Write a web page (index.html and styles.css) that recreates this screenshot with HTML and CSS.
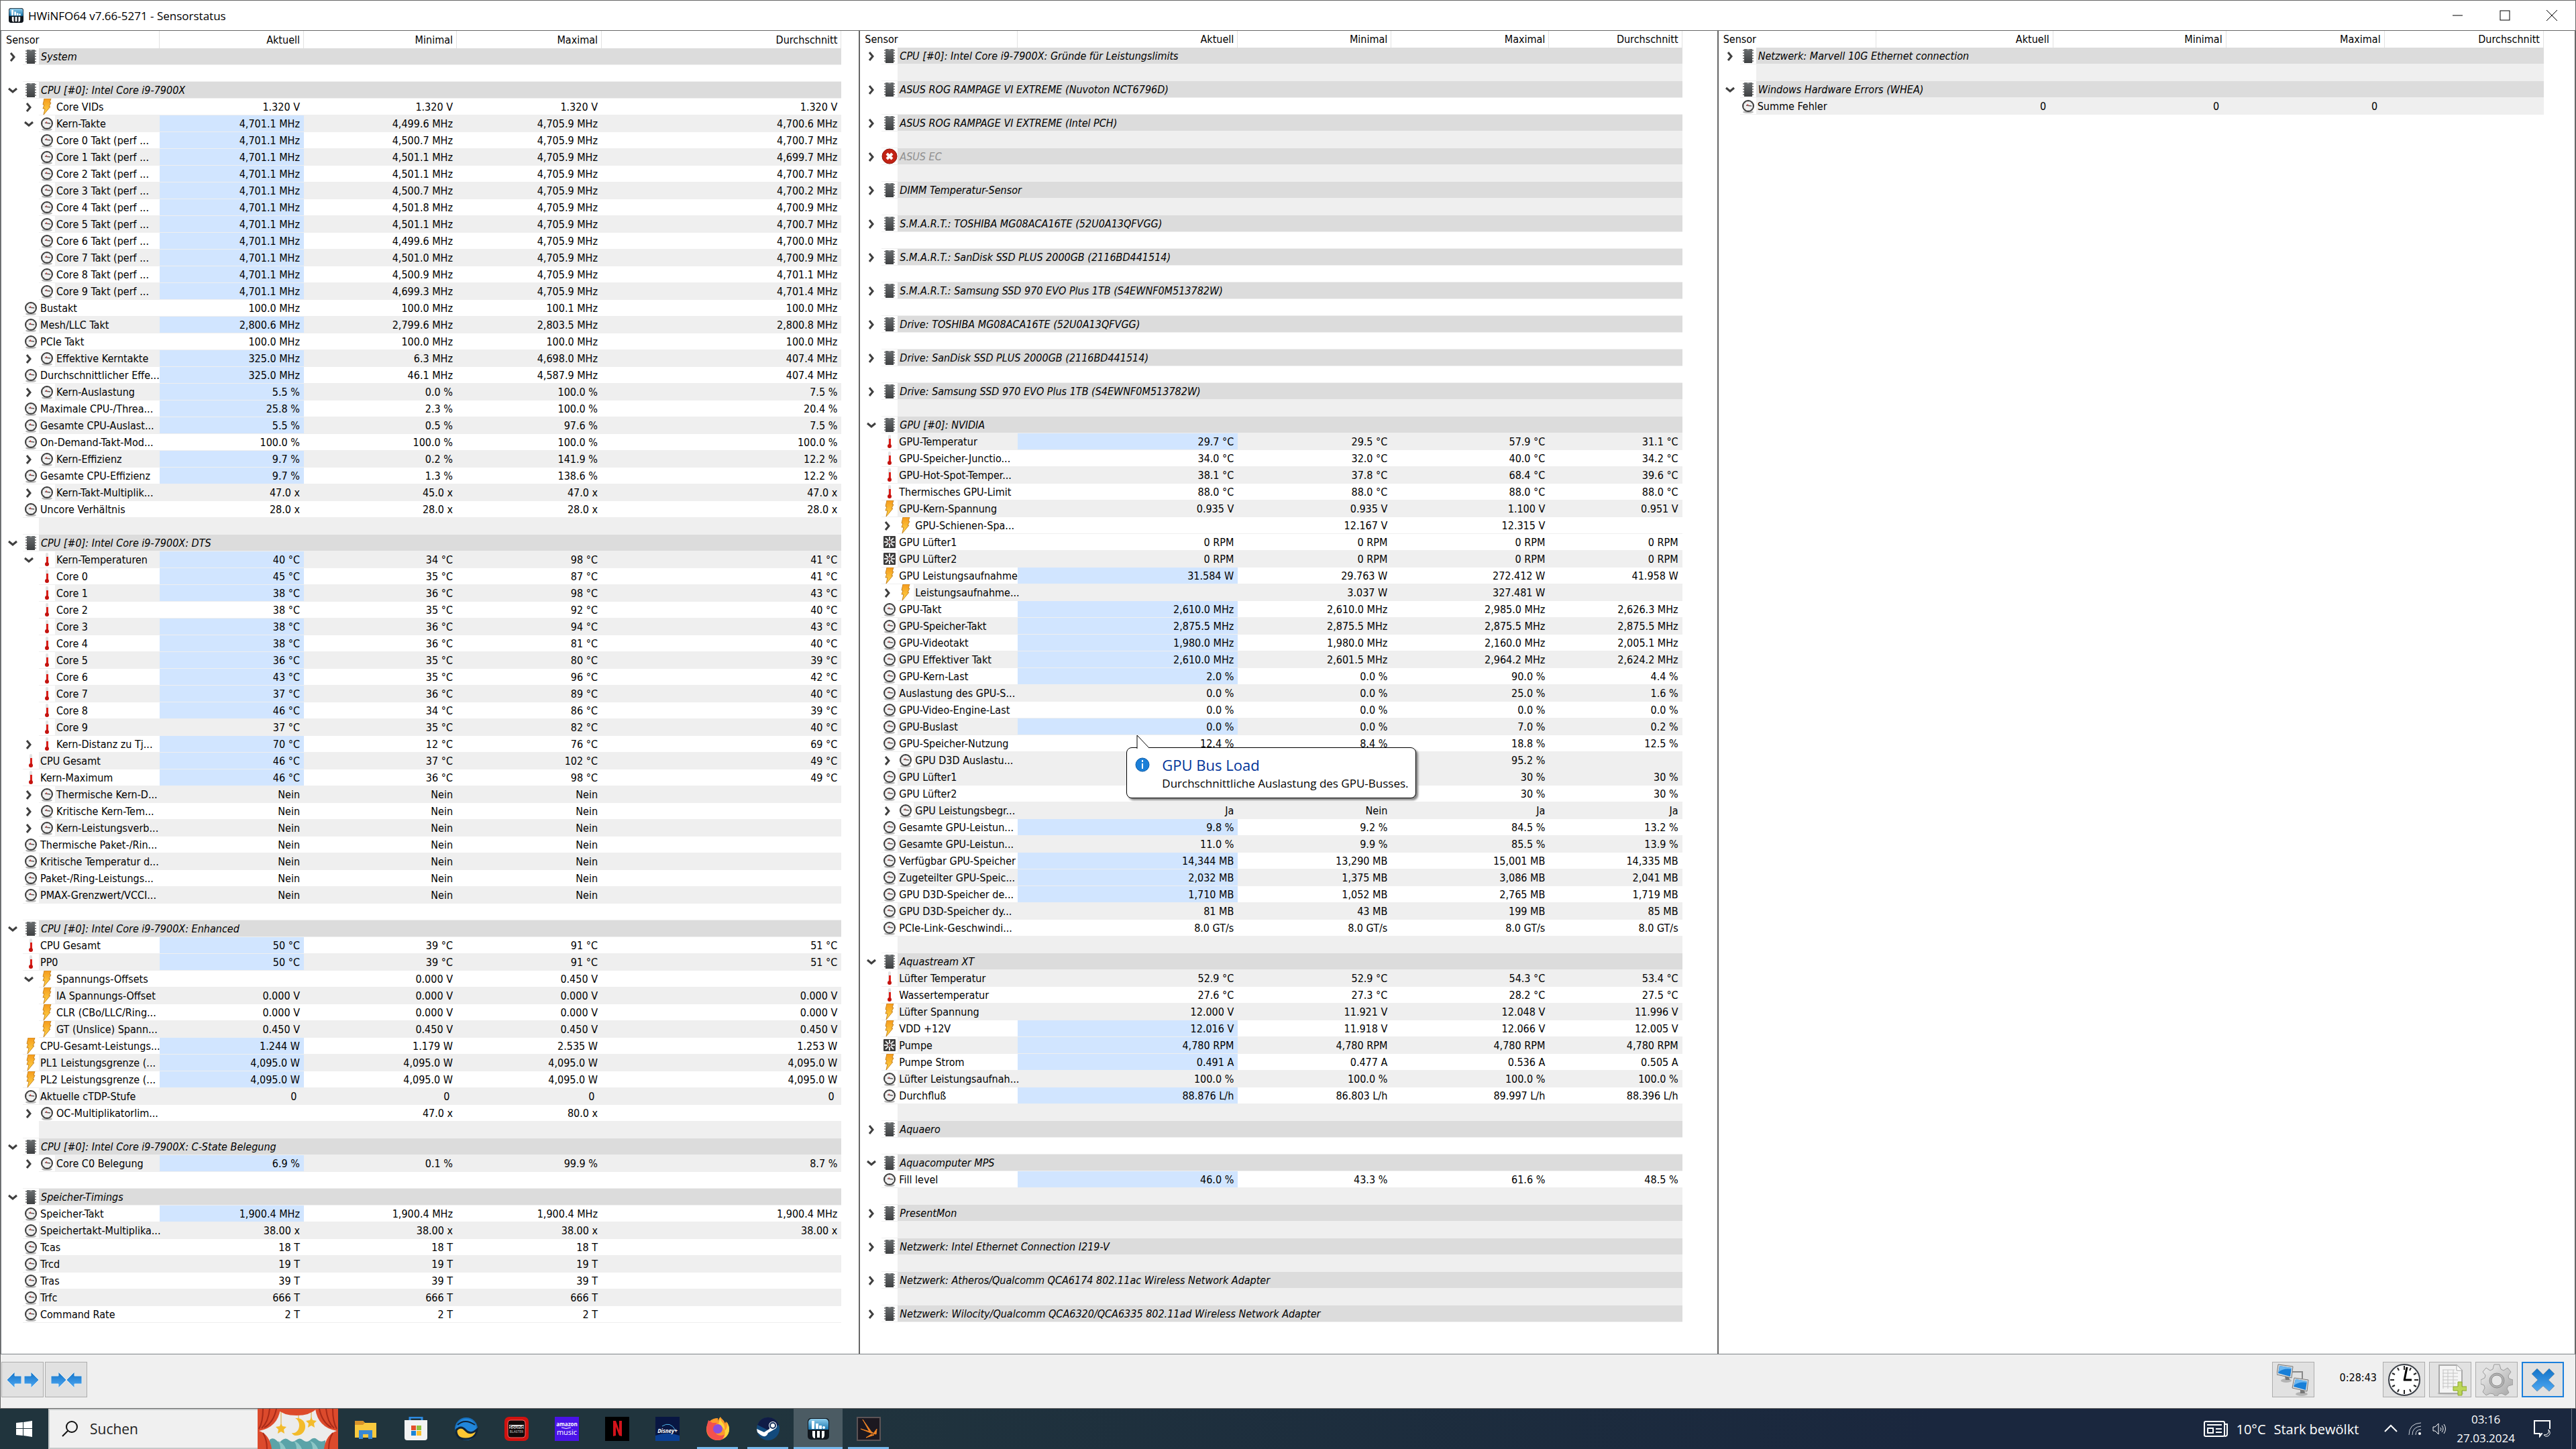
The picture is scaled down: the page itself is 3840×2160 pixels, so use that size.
FILE: index.html
```html
<!DOCTYPE html>
<html lang="de">
<head>
    <meta charset="UTF-8">
    <meta name="viewport" content="width=device-width, initial-scale=1.0">
    <title>HWiNFO64 v7.66-5271 - Sensorstatus</title>
    <link rel="stylesheet" href="styles.css">
</head>
<body>
    <!-- shared icons -->
    <svg class="defs" aria-hidden="true">
        <defs>
            <linearGradient id="boltFill" x1="0" y1="0" x2="0" y2="1">
                <stop offset="0" stop-color="#f59a1c"/>
                <stop offset="1" stop-color="#ffd84a"/>
            </linearGradient>
            <linearGradient id="blueFill" x1="0" y1="0" x2="0" y2="1">
                <stop offset="0" stop-color="#1273c8"/>
                <stop offset="1" stop-color="#4fa8f2"/>
            </linearGradient>
            <linearGradient id="steelFill" x1="0" y1="0" x2="1" y2="1">
                <stop offset="0" stop-color="#f4f4f4"/>
                <stop offset="1" stop-color="#a4a4a4"/>
            </linearGradient>
            <linearGradient id="chipFill" x1="0" y1="0" x2="0" y2="1">
                <stop offset="0" stop-color="#6a6e70"/>
                <stop offset="1" stop-color="#3e4042"/>
            </linearGradient>
            <linearGradient id="appFill" x1="0" y1="0" x2="0" y2="1">
                <stop offset="0" stop-color="#8ecdec"/>
                <stop offset="1" stop-color="#1b78b0"/>
            </linearGradient>
        </defs>
        <symbol id="chip" viewBox="0 0 24 24">
            <path d="M4 4h16M4 8h16M4 12h16M4 16h16M4 20h16" stroke="#8c8c8c" stroke-width="2"/>
            <rect x="6" y="2" width="12" height="21" fill="url(#chipFill)"/>
            <path d="M10 2a2 2 0 0 0 4 0z" fill="#9a9c9d"/>
        </symbol>
        <symbol id="clock" viewBox="0 0 24 24">
            <ellipse cx="12" cy="21" rx="8" ry="2" fill="#bdbdbd"/>
            <circle cx="12" cy="12" r="8" fill="#f1f1f1" stroke="#3c3c3c" stroke-width="2"/>
            <path d="M12 5v1M12 18v1M5 12h1M18 12h1M7 7l1 1M17 7l-1 1M7 17l1-1M17 17l-1-1" stroke="#999" stroke-width="1"/>
            <path d="M9 11l8 1" stroke="#555" stroke-width="1.5"/>
            <path d="M12 12l-1-3" stroke="#d33" stroke-width="1"/>
        </symbol>
        <symbol id="bolt" viewBox="0 0 24 24">
            <path d="M8 0h10l-2 6h2l-3 6h2L7 24l2-9H6l2-6H6z" fill="url(#boltFill)" stroke="#c98522" stroke-width="1"/>
        </symbol>
        <symbol id="temp" viewBox="0 0 24 24">
            <rect x="10" y="2" width="4" height="17" rx="2" fill="#e2e2e2"/>
            <rect x="11" y="8" width="3" height="12" fill="#dc1f1a"/>
            <circle cx="12" cy="19" r="3" fill="#c4120e"/>
        </symbol>
        <symbol id="fan" viewBox="0 0 24 24">
            <rect x="3" y="3" width="18" height="18" rx="1" fill="#3b3b3b"/>
            <path d="M12 4v16M4 12h16M6 6l12 12M18 6L6 18" stroke="#e9e9e9" stroke-width="2"/>
            <circle cx="12" cy="12" r="3" fill="#3b3b3b" stroke="#ddd" stroke-width="1"/>
            <circle cx="12" cy="12" r="1" fill="#e77"/>
        </symbol>
        <symbol id="error" viewBox="0 0 24 24">
            <circle cx="12" cy="12" r="11" fill="#c22214" stroke="#8e1208" stroke-width="1"/>
            <path d="M8 8l8 8M16 8l-8 8" stroke="#fff" stroke-width="4"/>
        </symbol>
        <symbol id="closed" viewBox="0 0 16 16">
            <path d="M5 2l5 6-5 6" fill="none" stroke="#3f3f3f" stroke-width="3"/>
        </symbol>
        <symbol id="open" viewBox="0 0 16 16">
            <path d="M2 5l6 5 6-5" fill="none" stroke="#3f3f3f" stroke-width="3"/>
        </symbol>
        <symbol id="app" viewBox="0 0 32 32">
            <rect x="0" y="0" width="32" height="32" rx="5" fill="#10161d"/>
            <path d="M1 17V6a5 5 0 0 1 5-5h20a5 5 0 0 1 5 5v11z" fill="url(#appFill)"/>
            <path d="M8 4v12M14 8v8M19 11v5" stroke="#fff" stroke-width="4"/>
            <circle cx="24" cy="14" r="2" fill="#fff"/>
            <path d="M9 19v6q0 3 2 3M16 19v10M23 19v6q0 3-2 3" stroke="#fff" stroke-width="4" fill="none"/>
        </symbol>
    </svg>

    <div class="window">
        <header class="titlebar">
            <svg class="app-icon"><use href="#app"/></svg>
            <h1 class="title">HWiNFO64 v7.66-5271 - Sensorstatus</h1>
            <button class="win-button" aria-label="Minimieren"><svg viewBox="0 0 16 16"><path d="M0 8h15" stroke="#000"/></svg></button>
            <button class="win-button" aria-label="Maximieren"><svg viewBox="0 0 16 16"><rect x="1" y="1" width="14" height="14" fill="none" stroke="#000"/></svg></button>
            <button class="win-button" aria-label="Schließen"><svg viewBox="0 0 16 16"><path d="M0 0l16 16M16 0L0 16" stroke="#000"/></svg></button>
        </header>

        <main class="panels">
            <section class="panel panel-left"><table class="sensors" id="left"></table></section>
            <section class="panel panel-middle"><table class="sensors" id="middle"></table></section>
            <section class="panel panel-right"><table class="sensors" id="right"></table></section>
        </main>

        <footer class="toolbar">
            <div class="tools-left">
                <button class="tool" aria-label="Spalten verbreitern">
                    <svg class="arrows" viewBox="0 0 48 28"><path d="M0 14L12 2v6h10v12H12v6zM48 14L36 2v6H26v12h10v6z" fill="url(#blueFill)" stroke="#dfe9ee"/></svg>
                </button>
                <button class="tool" aria-label="Spalten verkleinern">
                    <svg class="arrows" viewBox="0 0 48 28"><path d="M24 14L12 2v6H1v12h11v6zM24 14L36 2v6h11v12H36v6z" fill="url(#blueFill)" stroke="#dfe9ee"/></svg>
                </button>
            </div>
            <button class="tool" aria-label="Netzwerk">
                <svg viewBox="0 0 48 48">
                    <path d="M23 12h15v10" fill="none" stroke="#888" stroke-width="2"/>
                    <ellipse cx="14" cy="25" rx="8" ry="3" fill="#b4b4b4"/>
                    <path d="M12 18h6l1 6h-6z" fill="#777"/>
                    <path d="M2 1l22 3-2 17L0 16z" fill="#dcdcdc" stroke="#777"/>
                    <path d="M4 3l18 3-2 13L2 14z" fill="#187fd8"/>
                    <path d="M4 3l18 3v2Q10 6 3 12z" fill="#6db7f0"/>
                    <ellipse cx="37" cy="45" rx="9" ry="3" fill="#b4b4b4"/>
                    <path d="M35 39h6l1 5h-7z" fill="#777"/>
                    <path d="M26 21l21 3-2 17-22-5z" fill="#dcdcdc" stroke="#777"/>
                    <path d="M28 23l17 3-2 13-18-5z" fill="#187fd8"/>
                    <path d="M28 23l17 3v2q-12-2-19 4z" fill="#6db7f0"/>
                </svg>
            </button>
            <time class="uptime">0:28:43</time>
            <button class="tool" aria-label="Zeit zurücksetzen">
                <svg viewBox="0 0 48 48">
                    <circle cx="24" cy="24" r="23" fill="#fff" stroke="#3a3f47" stroke-width="2"/>
                    <path d="M24 3v6M24 39v6M3 24h6M39 24h6" stroke="#222" stroke-width="2"/>
                    <path d="M14 6l2 4M34 6l-2 4M6 14l4 2M6 34l4-2M42 14l-4 2M42 34l-4-2M14 42l2-4M34 42l-2-4" stroke="#222" stroke-width="2"/>
                    <path d="M24 25l4-20M23 24h12" stroke="#000" stroke-width="3"/>
                </svg>
            </button>
            <button class="tool" aria-label="Protokoll starten">
                <svg viewBox="0 0 48 48">
                    <ellipse cx="24" cy="44" rx="20" ry="3" fill="#cfcfcf"/>
                    <path d="M7 2h26l8 8v34H7z" fill="#f4f4f4" stroke="#a9a9a9" stroke-width="2"/>
                    <path d="M33 2v8h8" fill="#fff" stroke="#a9a9a9"/>
                    <path d="M12 9h18M12 14h23M12 19h23M12 24h23M12 29h20M12 34h16M13 9v28M20 9v28M28 9v26" fill="none" stroke="#c4c4c4" stroke-width="1"/>
                    <path d="M35 27h6v7h7v6h-7v7h-6v-7h-7v-6h7z" fill="#bcd658" stroke="#8aa62a"/>
                </svg>
            </button>
            <button class="tool" aria-label="Einstellungen">
                <svg viewBox="0 0 48 48">
                    <path d="M20 1h8l2 7 4 2 6-4 5 6-4 6 1 4 6 2v7l-7 2-2 4 3 6-5 4-6-3-4 1-2 3h-4l-2-3-5-1-6 3-5-5 3-6-1-4-5-2v-6l6-3 1-4-4-5 5-6 6 4 4-2z" fill="url(#steelFill)" stroke="#9b9b9b"/>
                    <circle cx="24" cy="25" r="11" fill="#b2b2b2" stroke="#8d8d8d"/>
                    <circle cx="24" cy="25" r="8" fill="#e6e6e6" stroke="#8d8d8d"/>
                </svg>
            </button>
            <button class="tool tool-default" aria-label="Schließen">
                <svg viewBox="0 0 48 48"><path d="M15 7l9 9 9-9 8 8-9 9 9 9-8 8-9-8-9 8-8-8 9-9-9-9z" fill="url(#blueFill)" stroke="#7c98ae"/></svg>
            </button>
        </footer>
    </div>

    <nav class="taskbar">
        <button class="start" aria-label="Start">
            <svg viewBox="0 0 24 24"><path d="M0 3l10-1v9H0zM11 2l13-2v11H11zM0 12h10v10L0 21zM11 12h13v12l-13-2z" fill="#fff"/></svg>
        </button>
        <label class="search">
            <svg class="search-icon" viewBox="0 0 24 24"><circle cx="15" cy="9" r="8" fill="none" stroke="#111" stroke-width="2"/><path d="M9 15l-8 8" stroke="#111" stroke-width="2"/></svg>
            <input class="search-box" type="text" placeholder="Suchen" aria-label="Suchen">
        </label>
        <svg class="highlight-art" viewBox="0 0 120 60">
            <rect width="120" height="60" fill="#ececec"/>
            <path d="M35 0v22M61 0v16M80 0v14" stroke="#d9a52b" stroke-width="1"/>
            <path d="M35 21l2 5 6 1-4 4 1 6-5-3-5 3 1-6-4-4 6-1zM80 12l2 5 6 1-4 4 1 6-5-3-5 3 1-6-4-4 6-1z" fill="#f3bb2c"/>
            <path d="M56 14c20-2 20 26 1 26-3 0-5-2-6-4 12 2 15-17 5-22z" fill="#f3bb2c"/>
            <path d="M18 60V46q5-4 10 1q4 5 8 0q6-5 11 0q5 4 10 0q6-5 11 0q5 4 10 0q6-6 11-1q5 5 12 1v13z" fill="#5ba3a8"/>
            <path d="M30 48q8 2 12 12h-8q0-7-4-12M54 48q8 2 12 12h-8q0-7-4-12M78 48q8 2 12 12h-8q0-7-4-12" fill="#8cc6c6"/>
            <path d="M28 0h60q-10 10-30 10T28 0z" fill="#dd4a2a"/>
            <path d="M0 0h34Q30 28 2 33q16 5 19 27H0zM120 0H86q4 28 32 33-16 5-19 27h21z" fill="#dc4a2c"/>
            <path d="M8 0q0 20-6 30M18 0q-2 20-12 29M28 0q-4 20-18 28M8 36q6 10 6 24M112 0q0 20 6 30M102 0q2 20 12 29M92 0q4 20 18 28M112 36q-6 10-6 24" fill="none" stroke="#a82a18" stroke-width="2"/>
        </svg>
        <div class="apps">
            <button class="task" aria-label="Explorer">
                <svg viewBox="0 0 36 36"><path d="M2 6h12l3 3h17v22H2z" fill="#f9c93e"/><path d="M2 6h12l3 3-3 3H2z" fill="#d8922a"/><path d="M8 33V20h20v13h-6v-7h-8v7z" fill="#3888d6"/></svg>
            </button>
            <button class="task" aria-label="Store">
                <svg viewBox="0 0 36 36"><path d="M9 6V1h18v5" fill="none" stroke="#2c8ae0" stroke-width="3"/><path d="M1 5h34v26a4 4 0 0 1-4 4H5a4 4 0 0 1-4-4z" fill="#f3f3f3"/><path d="M11 13h7v7h-7z" fill="#e2502b"/><path d="M19 13h7v7h-7z" fill="#90c140"/><path d="M11 21h7v7h-7z" fill="#1b85d6"/><path d="M19 21h7v7h-7z" fill="#fbc12e"/></svg>
            </button>
            <button class="task" aria-label="OpenAudible">
                <svg viewBox="0 0 36 36"><circle cx="18" cy="18" r="16" fill="#2187dc" stroke="#1770bd" stroke-width="2"/><path d="M3 20q7-8 14 0t17-1q-1 13-16 14T3 20z" fill="#fbc632" stroke="#0f2338" stroke-width="3"/><path d="M5 12Q16 2 31 12" fill="none" stroke="#0f2338" stroke-width="2"/></svg>
            </button>
            <button class="task" aria-label="Sound Blaster">
                <svg viewBox="0 0 36 36"><rect x="0" y="0" width="36" height="36" rx="7" fill="#d0120f"/><rect x="5" y="5" width="26" height="26" rx="4" fill="#100a0a" stroke="#f66" stroke-width="1"/><rect x="7" y="12" width="22" height="6" fill="#ddd"/><text x="18" y="18" font-size="7" font-weight="bold" text-anchor="middle" fill="#111">Sound</text><text x="18" y="24" font-size="5" text-anchor="middle" fill="#ccc">BLASTER</text></svg>
            </button>
            <button class="task" aria-label="Amazon Music">
                <svg viewBox="0 0 36 36"><rect width="36" height="36" fill="#4a12e8"/><text x="18" y="14" font-size="8" font-weight="bold" text-anchor="middle" fill="#fff">amazon</text><path d="M10 16q7 3 14 0" fill="none" stroke="#fff"/><text x="18" y="27" font-size="11" text-anchor="middle" fill="#fff">music</text></svg>
            </button>
            <button class="task" aria-label="Netflix">
                <svg viewBox="0 0 36 36"><rect width="36" height="36" fill="#000"/><path d="M12 6h4l5 14V6h4v23l-4-1-5-13v13l-4 1z" fill="#d3131b"/></svg>
            </button>
            <button class="task" aria-label="Disney+">
                <svg viewBox="0 0 36 36"><rect width="36" height="36" fill="#081642"/><path d="M0 36V28q18-7 36 0v8z" fill="#0a3f93"/><path d="M10 14q12-8 20 6" fill="none" stroke="#4fb4e8" stroke-width="1"/><text x="18" y="24" font-size="8" font-style="italic" font-weight="bold" text-anchor="middle" fill="#fff">Disney+</text></svg>
            </button>
            <button class="task running" aria-label="Firefox">
                <svg viewBox="0 0 36 36"><path d="M18 2C8 2 1 9 1 19s8 16 17 16 17-7 17-17c0-6-3-9-5-11l-1 3C27 4 23 3 22 0c-3 3-4 6-3 8z" fill="#ff9a2b"/><path d="M2 12l2-7 6 4h7l-4 5 3 12q9 5 17-3-4 12-15 12C7 35-1 25 2 12z" fill="#f4514d"/><path d="M22 0c-2 8 8 8 6 21 5-4 4-9 4-13l3 8c1 10-5 15-10 17 7-9 4-16-6-22z" fill="#ffd43c"/><circle cx="18" cy="18" r="7" fill="#8a4fe0"/></svg>
            </button>
            <button class="task running" aria-label="Steam">
                <svg viewBox="0 0 36 36"><circle cx="18" cy="18" r="17" fill="#124a7c"/><path d="M2 12a17 17 0 0 1 32 0L18 20z" fill="#101b46"/><path d="M1 18l11 5 8-5 2-7 9 4-6 5-7 4q-2 6-7 5-4-1-9-6z" fill="#fff"/><circle cx="25" cy="13" r="6" fill="#fff"/><circle cx="25" cy="13" r="4" fill="#fff" stroke="#16305c" stroke-width="2"/></svg>
            </button>
            <button class="task running active" aria-label="HWiNFO64">
                <svg viewBox="0 0 36 36"><use href="#app" x="2" y="2" width="32" height="32"/></svg>
            </button>
            <button class="task running" aria-label="Monitor">
                <svg viewBox="0 0 36 36"><rect x="1" y="1" width="34" height="34" fill="#1c1820" stroke="#5b5355" stroke-width="2"/><path d="M9 4l12 17 1 2-3-1zM6 18l17 5 3 2-5-1zM14 31l8-5 4 1zM29 26l-4-1 5-7z" fill="#ee8224" stroke="#ee8224"/></svg>
            </button>
        </div>
        <div class="tray">
            <button class="weather">
                <svg class="news-icon" viewBox="0 0 36 24"><rect x="1" y="1" width="30" height="22" rx="2" fill="none" stroke="#fff" stroke-width="2"/><path d="M31 5h4v15q0 3-4 3" fill="none" stroke="#fff" stroke-width="2"/><path d="M5 6h22M18 12h9M18 17h9" stroke="#fff" stroke-width="2"/><rect x="6" y="11" width="8" height="7" fill="none" stroke="#fff" stroke-width="2"/></svg>
                <span>10°C</span>
                <span>Stark bewölkt</span>
            </button>
            <button class="tray-icon" aria-label="Ausgeblendete Symbole"><svg viewBox="0 0 20 20"><path d="M1 14l9-9 9 9" fill="none" stroke="#fff" stroke-width="2"/></svg></button>
            <button class="tray-icon" aria-label="Netzwerk"><svg viewBox="0 0 20 20"><path d="M1 19Q1 2 19 1M6 19Q6 7 19 6M11 19q0-8 8-8" fill="none" stroke="#cfd4dc"/><circle cx="17" cy="17" r="2" fill="#fff"/></svg></button>
            <button class="tray-icon" aria-label="Lautstärke"><svg viewBox="0 0 20 20"><path d="M1 7h3l5-5v16l-5-5H1zM12 8q2 2 0 5M14 5q4 5 0 10M17 3q5 7 0 14" fill="none" stroke="#fff"/></svg></button>
            <div class="clock">
                <time>03:16</time>
                <time>27.03.2024</time>
            </div>
            <button class="notify" aria-label="Benachrichtigungen"><svg viewBox="0 0 26 26"><path d="M13 20h-1l-3 4v-4H1V1h23v12" fill="none" stroke="#fff" stroke-width="2"/><path d="M22 14q2 8-7 8 2 3 6 2 6-4 1-10z" fill="none" stroke="#fff"/></svg></button>
        </div>
    </nav>

    <template id="tip">
        <div class="tip" role="tooltip">
            <svg class="tip-tail" viewBox="0 0 21 21"><path d="M1 21V1l18 19" fill="#fff" stroke="#000"/></svg>
            <svg class="tip-icon" viewBox="0 0 22 22"><circle cx="11" cy="11" r="10" fill="#1b7fd8" stroke="#0c5ca8"/><path d="M11 9v8M11 4v3" stroke="#fff" stroke-width="2"/></svg>
            <strong class="tip-title">GPU Bus Load</strong>
            <span class="tip-text">Durchschnittliche Auslastung des GPU-Busses.</span>
        </div>
    </template>

    <script src="sensors.js"></script>
</body>
</html>
```
FILE: styles.css
```css
* {
    box-sizing: border-box;
}
body {
    margin: 0;
    min-height: 100vh;
    display: flex;
    flex-direction: column;
    font-family: "DejaVu Sans Condensed", "Noto Sans", sans-serif;
    font-size: 16px;
    color: #000;
    background-color: #fff;
}
button {
    margin: 0;
    padding: 0;
    border: 0;
    background: none;
    font: inherit;
    color: inherit;
}
svg {
    display: block;
}
.defs {
    position: absolute;
    width: 0;
    height: 0;
}

/* window */
.window {
    flex: 1;
    display: flex;
    flex-direction: column;
    border: 1px solid #666;
}
.titlebar {
    display: flex;
    align-items: center;
    height: 44px;
    padding-left: 12px;
}
.app-icon {
    width: 22px;
    height: 22px;
}
.title {
    flex: 1;
    margin: 0 0 0 7px;
    font-family: "Open Sans", sans-serif;
    font-size: 17px;
    font-weight: normal;
}
.win-button {
    width: 70px;
    height: 44px;
    display: flex;
    align-items: center;
    justify-content: center;
}
.win-button svg {
    width: 16px;
    height: 16px;
}

/* sensor lists */
.panels {
    flex: 1;
    display: grid;
    grid-template-columns: repeat(3, minmax(0, 1fr));
    border-top: 1px solid #666;
    border-bottom: 1px solid #7d8287;
}
.panel {
    border-left: 2px solid #666;
}
.panel-left {
    padding-right: 26px;
    border-left: 1px solid #7d8287;
}
.panel-middle {
    padding-right: 52px;
}
.panel-right {
    padding-right: 46px;
    border-right: 1px solid #666;
}
.sensors {
    width: 100%;
    table-layout: fixed;
    border-collapse: separate;
    border-spacing: 0;
}
.sensors th {
    height: 25px;
    padding: 0 5px 0 0;
    border-right: 1px solid #e2e2e2;
    font-weight: normal;
    text-align: right;
}
.sensors th:first-child {
    width: 235px;
    padding-left: 7px;
    text-align: left;
}
.sensors .expander {
    flex: none;
}
.panel-left th { height: 26px; }
.panel-left th:first-child { width: 236px; }
.panel-left th:nth-child(2) { width: 215px; }
.panel-left th:nth-child(3) { width: 228px; }
.panel-left th:nth-child(4) { width: 216px; }
.panel-middle th:nth-child(2) { width: 328px; }
.panel-middle th:nth-child(3) { width: 229px; }
.panel-middle th:nth-child(4) { width: 235px; }
.panel-right th:nth-child(2) { width: 264px; }
.panel-right th:nth-child(3) { width: 258px; }
.panel-right th:nth-child(4) { width: 236px; }
#left th {
    height: 26px;
}
.sensors td {
    height: 25px;
    padding: 0;
    line-height: 22px;
    white-space: nowrap;
}
.value,
.label {
    border-bottom: 1px solid #efefef;
}
.sensors .value {
    padding: 2px 6px 0 0;
    text-align: right;
}
.gray .value,
.gray .label {
    background-color: #efefef;
}
.sensors .changed {
    background-color: #d1e5ff;
}
.name {
    display: flex;
    height: 25px;
}
.expander {
    width: 32px;
    display: flex;
    align-items: center;
    justify-content: center;
    padding-left: 2px;
}
.expander svg {
    width: 16px;
    height: 16px;
}
.child .expander {
    width: 56px;
    padding: 0 2px 0 28px;
}
.icon {
    flex: none;
    width: 24px;
    height: 25px;
    border-bottom: 1px solid #efefef;
}
.icon svg {
    width: 24px;
    height: 24px;
}
.label {
    flex: 1;
    min-width: 0;
    padding: 2px 0 0 2px;
}
.group .label {
    padding-left: 3px;
    background-color: #dcdcdc;
    font-style: italic;
}
.off .label {
    color: #8f8f8f;
}

/* tooltip over the hovered cell */
.has-tip {
    position: relative;
}
.tip {
    position: absolute;
    z-index: 1;
    top: 43px;
    left: 162px;
    display: grid;
    grid-template-columns: 22px auto;
    column-gap: 18px;
    padding: 10px 10px 8px 12px;
    border: 1px solid #000;
    border-radius: 8px;
    background-color: #fff;
    box-shadow: 3px 3px 3px #888;
    font-family: "Open Sans", sans-serif;
    text-align: left;
}
.tip-tail {
    position: absolute;
    top: -20px;
    left: 14px;
    width: 21px;
    height: 21px;
}
.tip-icon {
    width: 22px;
    height: 22px;
    margin-top: 4px;
}
.tip-title {
    font-size: 22px;
    font-weight: normal;
    line-height: 30px;
    color: #003399;
}
.tip-text {
    grid-column: 2;
    font-size: 17px;
    line-height: 26px;
}

/* toolbar */
.toolbar {
    display: flex;
    align-items: flex-start;
    gap: 6px;
    height: 80px;
    padding: 11px 17px 0 1px;
    background-color: #f0f0f0;
}
.tools-left {
    flex: 1;
    display: flex;
    gap: 2px;
}
.tool {
    width: 63px;
    height: 53px;
    display: flex;
    align-items: center;
    justify-content: center;
    border: 1px solid #adadad;
    background-color: #e1e1e1;
}
.tool svg {
    width: 48px;
    height: 48px;
}
.tool .arrows {
    height: 28px;
}
.tool-default {
    border: 2px solid #1a7fdc;
}
.uptime {
    padding: 0 3px 0 32px;
    line-height: 47px;
}

/* taskbar */
.taskbar {
    display: flex;
    height: 60px;
    color: #fff;
    background: linear-gradient(to right, #20343d 0%, #20343d 30%, #1a273e 75%);
    font-family: "Open Sans", sans-serif;
}
.start {
    width: 72px;
    display: flex;
    align-items: center;
    justify-content: center;
}
.start svg {
    width: 24px;
    height: 24px;
}
.search {
    display: flex;
    align-items: center;
    width: 312px;
    padding-left: 18px;
    border: 2px solid #c6c9ca;
    border-right: 0;
    background-color: #f0f0f0;
}
.search-icon {
    width: 24px;
    height: 24px;
}
.search-box {
    flex: 1;
    min-width: 0;
    margin-left: 18px;
    padding: 0;
    border: 0;
    background: none;
    font-family: inherit;
    font-size: 21px;
}
.search-box::placeholder {
    color: #222;
    opacity: 1;
}
.highlight-art {
    width: 120px;
    height: 60px;
}
.apps {
    flex: 1;
    display: flex;
    gap: 2px;
    padding-left: 4px;
}
.task {
    display: flex;
    flex-direction: column;
    align-items: center;
    width: 73px;
    padding-top: 12px;
}
.task svg {
    width: 36px;
    height: 36px;
}
.running::after {
    content: "";
    width: 61px;
    height: 3px;
    margin-top: 9px;
    background-color: #76b9ed;
}
.active {
    background-color: #4b5b63;
}
.active::after {
    width: 73px;
}
.tray {
    display: flex;
    align-items: center;
    gap: 16px;
    padding-right: 6px;
}
.weather {
    display: flex;
    align-items: center;
    gap: 12px;
    margin-right: 22px;
    font-size: 20px;
}
.news-icon {
    width: 36px;
    height: 24px;
}
.tray-icon svg {
    width: 20px;
    height: 20px;
}
.clock {
    display: flex;
    flex-direction: column;
    font-size: 17px;
    line-height: 28px;
    text-align: center;
}
.notify {
    height: 60px;
    padding: 0 30px 0 12px;
    border-right: 1px solid #6d7585;
}
.notify svg {
    width: 26px;
    height: 26px;
}
```
FILE: sensors.js
```javascript
// A row is [marks, icon, name, current, min, max, average].
// marks: "G" sensor group, ">" closed, "v" open, "c" child row,
//        "*" value changed, "=" keep the shade of the row above.
// "white" and "gray" are empty rows that set the shade.
const left = [
    ["G>", "chip", "System"],
    "white",
    ["Gv", "chip", "CPU [#0]: Intel Core i9-7900X"],
    ["c>", "bolt", "Core VIDs", "1.320 V", "1.320 V", "1.320 V", "1.320 V"],
    ["cv*", "clock", "Kern-Takte", "4,701.1 MHz", "4,499.6 MHz", "4,705.9 MHz", "4,700.6 MHz"],
    ["c*", "clock", "Core 0 Takt (perf ...", "4,701.1 MHz", "4,500.7 MHz", "4,705.9 MHz", "4,700.7 MHz"],
    ["c*", "clock", "Core 1 Takt (perf ...", "4,701.1 MHz", "4,501.1 MHz", "4,705.9 MHz", "4,699.7 MHz"],
    ["c*", "clock", "Core 2 Takt (perf ...", "4,701.1 MHz", "4,501.1 MHz", "4,705.9 MHz", "4,700.7 MHz"],
    ["c*", "clock", "Core 3 Takt (perf ...", "4,701.1 MHz", "4,500.7 MHz", "4,705.9 MHz", "4,700.2 MHz"],
    ["c*", "clock", "Core 4 Takt (perf ...", "4,701.1 MHz", "4,501.8 MHz", "4,705.9 MHz", "4,700.9 MHz"],
    ["c*", "clock", "Core 5 Takt (perf ...", "4,701.1 MHz", "4,501.1 MHz", "4,705.9 MHz", "4,700.7 MHz"],
    ["c*", "clock", "Core 6 Takt (perf ...", "4,701.1 MHz", "4,499.6 MHz", "4,705.9 MHz", "4,700.0 MHz"],
    ["c*", "clock", "Core 7 Takt (perf ...", "4,701.1 MHz", "4,501.0 MHz", "4,705.9 MHz", "4,700.9 MHz"],
    ["c*", "clock", "Core 8 Takt (perf ...", "4,701.1 MHz", "4,500.9 MHz", "4,705.9 MHz", "4,701.1 MHz"],
    ["c*", "clock", "Core 9 Takt (perf ...", "4,701.1 MHz", "4,699.3 MHz", "4,705.9 MHz", "4,701.4 MHz"],
    ["", "clock", "Bustakt", "100.0 MHz", "100.0 MHz", "100.1 MHz", "100.0 MHz"],
    ["*", "clock", "Mesh/LLC Takt", "2,800.6 MHz", "2,799.6 MHz", "2,803.5 MHz", "2,800.8 MHz"],
    ["", "clock", "PCIe Takt", "100.0 MHz", "100.0 MHz", "100.0 MHz", "100.0 MHz"],
    ["c>*", "clock", "Effektive Kerntakte", "325.0 MHz", "6.3 MHz", "4,698.0 MHz", "407.4 MHz"],
    ["*", "clock", "Durchschnittlicher Effe...", "325.0 MHz", "46.1 MHz", "4,587.9 MHz", "407.4 MHz"],
    ["c>*", "clock", "Kern-Auslastung", "5.5 %", "0.0 %", "100.0 %", "7.5 %"],
    ["*", "clock", "Maximale CPU-/Threa...", "25.8 %", "2.3 %", "100.0 %", "20.4 %"],
    ["*", "clock", "Gesamte CPU-Auslast...", "5.5 %", "0.5 %", "97.6 %", "7.5 %"],
    ["", "clock", "On-Demand-Takt-Mod...", "100.0 %", "100.0 %", "100.0 %", "100.0 %"],
    ["c>*", "clock", "Kern-Effizienz", "9.7 %", "0.2 %", "141.9 %", "12.2 %"],
    ["*", "clock", "Gesamte CPU-Effizienz", "9.7 %", "1.3 %", "138.6 %", "12.2 %"],
    ["c>", "clock", "Kern-Takt-Multiplik...", "47.0 x", "45.0 x", "47.0 x", "47.0 x"],
    ["", "clock", "Uncore Verhältnis", "28.0 x", "28.0 x", "28.0 x", "28.0 x"],
    "gray",
    ["Gv", "chip", "CPU [#0]: Intel Core i9-7900X: DTS"],
    ["cv*", "temp", "Kern-Temperaturen", "40 °C", "34 °C", "98 °C", "41 °C"],
    ["c*", "temp", "Core 0", "45 °C", "35 °C", "87 °C", "41 °C"],
    ["c*", "temp", "Core 1", "38 °C", "36 °C", "98 °C", "43 °C"],
    ["c", "temp", "Core 2", "38 °C", "35 °C", "92 °C", "40 °C"],
    ["c*", "temp", "Core 3", "38 °C", "36 °C", "94 °C", "43 °C"],
    ["c*", "temp", "Core 4", "38 °C", "36 °C", "81 °C", "40 °C"],
    ["c*", "temp", "Core 5", "36 °C", "35 °C", "80 °C", "39 °C"],
    ["c*", "temp", "Core 6", "43 °C", "35 °C", "96 °C", "42 °C"],
    ["c*", "temp", "Core 7", "37 °C", "36 °C", "89 °C", "40 °C"],
    ["c*", "temp", "Core 8", "46 °C", "34 °C", "86 °C", "39 °C"],
    ["c", "temp", "Core 9", "37 °C", "35 °C", "82 °C", "40 °C"],
    ["c>*", "temp", "Kern-Distanz zu Tj...", "70 °C", "12 °C", "76 °C", "69 °C"],
    ["*", "temp", "CPU Gesamt", "46 °C", "37 °C", "102 °C", "49 °C"],
    ["*", "temp", "Kern-Maximum", "46 °C", "36 °C", "98 °C", "49 °C"],
    ["c>", "clock", "Thermische Kern-D...", "Nein", "Nein", "Nein", ""],
    ["c>", "clock", "Kritische Kern-Tem...", "Nein", "Nein", "Nein", ""],
    ["c>", "clock", "Kern-Leistungsverb...", "Nein", "Nein", "Nein", ""],
    ["", "clock", "Thermische Paket-/Rin...", "Nein", "Nein", "Nein", ""],
    ["", "clock", "Kritische Temperatur d...", "Nein", "Nein", "Nein", ""],
    ["", "clock", "Paket-/Ring-Leistungs...", "Nein", "Nein", "Nein", ""],
    ["", "clock", "PMAX-Grenzwert/VCCI...", "Nein", "Nein", "Nein", ""],
    "white",
    ["Gv", "chip", "CPU [#0]: Intel Core i9-7900X: Enhanced"],
    ["*", "temp", "CPU Gesamt", "50 °C", "39 °C", "91 °C", "51 °C"],
    ["*", "temp", "PP0", "50 °C", "39 °C", "91 °C", "51 °C"],
    ["cv", "bolt", "Spannungs-Offsets", "", "0.000 V", "0.450 V", ""],
    ["c", "bolt", "IA Spannungs-Offset", "0.000 V", "0.000 V", "0.000 V", "0.000 V"],
    ["c", "bolt", "CLR (CBo/LLC/Ring...", "0.000 V", "0.000 V", "0.000 V", "0.000 V"],
    ["c", "bolt", "GT (Unslice) Spann...", "0.450 V", "0.450 V", "0.450 V", "0.450 V"],
    ["*", "bolt", "CPU-Gesamt-Leistungs...", "1.244 W", "1.179 W", "2.535 W", "1.253 W"],
    ["*", "bolt", "PL1 Leistungsgrenze (...", "4,095.0 W", "4,095.0 W", "4,095.0 W", "4,095.0 W"],
    ["*", "bolt", "PL2 Leistungsgrenze (...", "4,095.0 W", "4,095.0 W", "4,095.0 W", "4,095.0 W"],
    ["", "clock", "Aktuelle cTDP-Stufe", "0\u00a0", "0\u00a0", "0\u00a0", "0\u00a0"],
    ["c>", "clock", "OC-Multiplikatorlim...", "", "47.0 x", "80.0 x", ""],
    "gray",
    ["Gv", "chip", "CPU [#0]: Intel Core i9-7900X: C-State Belegung"],
    ["c>*", "clock", "Core C0 Belegung", "6.9 %", "0.1 %", "99.9 %", "8.7 %"],
    "white",
    ["Gv", "chip", "Speicher-Timings"],
    ["*", "clock", "Speicher-Takt", "1,900.4 MHz", "1,900.4 MHz", "1,900.4 MHz", "1,900.4 MHz"],
    ["", "clock", "Speichertakt-Multiplika...", "38.00 x", "38.00 x", "38.00 x", "38.00 x"],
    ["", "clock", "Tcas", "18 T", "18 T", "18 T", ""],
    ["", "clock", "Trcd", "19 T", "19 T", "19 T", ""],
    ["", "clock", "Tras", "39 T", "39 T", "39 T", ""],
    ["", "clock", "Trfc", "666 T", "666 T", "666 T", ""],
    ["", "clock", "Command Rate", "2 T", "2 T", "2 T", ""]
];

const middle = [
    ["G>", "chip", "CPU [#0]: Intel Core i9-7900X: Gründe für Leistungslimits"],
    "gray",
    ["G>", "chip", "ASUS ROG RAMPAGE VI EXTREME (Nuvoton NCT6796D)"],
    "white",
    ["G>", "chip", "ASUS ROG RAMPAGE VI EXTREME (Intel PCH)"],
    "gray",
    ["G>o", "error", "ASUS EC"],
    "gray",
    ["G>", "chip", "DIMM Temperatur-Sensor"],
    "gray",
    ["G>", "chip", "S.M.A.R.T.: TOSHIBA MG08ACA16TE (52U0A13QFVGG)"],
    "white",
    ["G>", "chip", "S.M.A.R.T.: SanDisk SSD PLUS 2000GB (2116BD441514)"],
    "white",
    ["G>", "chip", "S.M.A.R.T.: Samsung SSD 970 EVO Plus 1TB (S4EWNF0M513782W)"],
    "white",
    ["G>", "chip", "Drive: TOSHIBA MG08ACA16TE (52U0A13QFVGG)"],
    "white",
    ["G>", "chip", "Drive: SanDisk SSD PLUS 2000GB (2116BD441514)"],
    "white",
    ["G>", "chip", "Drive: Samsung SSD 970 EVO Plus 1TB (S4EWNF0M513782W)"],
    "gray",
    ["Gv", "chip", "GPU [#0]: NVIDIA"],
    ["*", "temp", "GPU-Temperatur", "29.7 °C", "29.5 °C", "57.9 °C", "31.1 °C"],
    ["", "temp", "GPU-Speicher-Junctio...", "34.0 °C", "32.0 °C", "40.0 °C", "34.2 °C"],
    ["", "temp", "GPU-Hot-Spot-Temper...", "38.1 °C", "37.8 °C", "68.4 °C", "39.6 °C"],
    ["", "temp", "Thermisches GPU-Limit", "88.0 °C", "88.0 °C", "88.0 °C", "88.0 °C"],
    ["", "bolt", "GPU-Kern-Spannung", "0.935 V", "0.935 V", "1.100 V", "0.951 V"],
    ["c>", "bolt", "GPU-Schienen-Spa...", "", "12.167 V", "12.315 V", ""],
    ["=", "fan", "GPU Lüfter1", "0 RPM", "0 RPM", "0 RPM", "0 RPM"],
    ["", "fan", "GPU Lüfter2", "0 RPM", "0 RPM", "0 RPM", "0 RPM"],
    ["*", "bolt", "GPU Leistungsaufnahme", "31.584 W", "29.763 W", "272.412 W", "41.958 W"],
    ["c>", "bolt", "Leistungsaufnahme...", "", "3.037 W", "327.481 W", ""],
    ["*", "clock", "GPU-Takt", "2,610.0 MHz", "2,610.0 MHz", "2,985.0 MHz", "2,626.3 MHz"],
    ["*", "clock", "GPU-Speicher-Takt", "2,875.5 MHz", "2,875.5 MHz", "2,875.5 MHz", "2,875.5 MHz"],
    ["*", "clock", "GPU-Videotakt", "1,980.0 MHz", "1,980.0 MHz", "2,160.0 MHz", "2,005.1 MHz"],
    ["*", "clock", "GPU Effektiver Takt", "2,610.0 MHz", "2,601.5 MHz", "2,964.2 MHz", "2,624.2 MHz"],
    ["*", "clock", "GPU-Kern-Last", "2.0 %", "0.0 %", "90.0 %", "4.4 %"],
    ["", "clock", "Auslastung des GPU-S...", "0.0 %", "0.0 %", "25.0 %", "1.6 %"],
    ["", "clock", "GPU-Video-Engine-Last", "0.0 %", "0.0 %", "0.0 %", "0.0 %"],
    ["*t", "clock", "GPU-Buslast", "0.0 %", "0.0 %", "7.0 %", "0.2 %"],
    ["", "clock", "GPU-Speicher-Nutzung", "12.4 %", "8.4 %", "18.8 %", "12.5 %"],
    ["c>", "clock", "GPU D3D Auslastu...", "", "", "95.2 %", ""],
    ["=", "clock", "GPU Lüfter1", "", "", "30 %", "30 %"],
    ["", "clock", "GPU Lüfter2", "", "", "30 %", "30 %"],
    ["c>", "clock", "GPU Leistungsbegr...", "Ja", "Nein", "Ja", "Ja"],
    ["*", "clock", "Gesamte GPU-Leistun...", "9.8 %", "9.2 %", "84.5 %", "13.2 %"],
    ["", "clock", "Gesamte GPU-Leistun...", "11.0 %", "9.9 %", "85.5 %", "13.9 %"],
    ["*", "clock", "Verfügbar GPU-Speicher", "14,344 MB", "13,290 MB", "15,001 MB", "14,335 MB"],
    ["*", "clock", "Zugeteilter GPU-Speic...", "2,032 MB", "1,375 MB", "3,086 MB", "2,041 MB"],
    ["*", "clock", "GPU D3D-Speicher de...", "1,710 MB", "1,052 MB", "2,765 MB", "1,719 MB"],
    ["", "clock", "GPU D3D-Speicher dy...", "81 MB", "43 MB", "199 MB", "85 MB"],
    ["", "clock", "PCIe-Link-Geschwindi...", "8.0 GT/s", "8.0 GT/s", "8.0 GT/s", "8.0 GT/s"],
    "gray",
    ["Gv", "chip", "Aquastream XT"],
    ["", "temp", "Lüfter Temperatur", "52.9 °C", "52.9 °C", "54.3 °C", "53.4 °C"],
    ["", "temp", "Wassertemperatur", "27.6 °C", "27.3 °C", "28.2 °C", "27.5 °C"],
    ["", "bolt", "Lüfter Spannung", "12.000 V", "11.921 V", "12.048 V", "11.996 V"],
    ["*", "bolt", "VDD +12V", "12.016 V", "11.918 V", "12.066 V", "12.005 V"],
    ["*", "fan", "Pumpe", "4,780 RPM", "4,780 RPM", "4,780 RPM", "4,780 RPM"],
    ["*", "bolt", "Pumpe Strom", "0.491 A", "0.477 A", "0.536 A", "0.505 A"],
    ["", "clock", "Lüfter Leistungsaufnah...", "100.0 %", "100.0 %", "100.0 %", "100.0 %"],
    ["*", "clock", "Durchfluß", "88.876 L/h", "86.803 L/h", "89.997 L/h", "88.396 L/h"],
    "gray",
    ["G>", "chip", "Aquaero"],
    "white",
    ["Gv", "chip", "Aquacomputer MPS"],
    ["*", "clock", "Fill level", "46.0 %", "43.3 %", "61.6 %", "48.5 %"],
    "gray",
    ["G>", "chip", "PresentMon"],
    "gray",
    ["G>", "chip", "Netzwerk: Intel Ethernet Connection I219-V"],
    "gray",
    ["G>", "chip", "Netzwerk: Atheros/Qualcomm QCA6174 802.11ac Wireless Network Adapter"],
    "gray",
    ["G>", "chip", "Netzwerk: Wilocity/Qualcomm QCA6320/QCA6335 802.11ad Wireless Network Adapter"]
];

const right = [
    ["G>", "chip", "Netzwerk: Marvell 10G Ethernet connection"],
    "gray",
    ["Gv", "chip", "Windows Hardware Errors (WHEA)"],
    ["", "clock", "Summe Fehler", "0\u00a0", "0\u00a0", "0\u00a0", ""]
];

function useIcon(id) {
    return '<svg><use href="#' + id + '"/></svg>';
}

function nameCell(marks, icon, name) {
    let expander = '<span class="expander"></span>';
    if (marks.includes(">")) {
        expander = '<button class="expander" aria-label="Aufklappen">' + useIcon("closed") + "</button>";
    } else if (marks.includes("v")) {
        expander = '<button class="expander" aria-label="Zuklappen">' + useIcon("open") + "</button>";
    }
    return '<div class="name">' + expander +
        '<span class="icon">' + (icon ? useIcon(icon) : "") + "</span>" +
        '<span class="label">' + name + "</span></div>";
}

function fillTable(id, rows) {
    let html = "<thead><tr><th>Sensor</th><th>Aktuell</th><th>Minimal</th><th>Maximal</th><th>Durchschnitt</th></tr></thead><tbody>";
    let gray = true;

    for (const row of rows) {
        if (typeof row === "string") {
            gray = row === "gray";
            html += '<tr class="' + row + '"><td colspan="5">' + nameCell("", "", "") + "</td></tr>";
            gray = !gray;
            continue;
        }

        const [marks, icon, name, ...values] = row;
        if (marks.includes("G")) {
            html += '<tr class="group' + (marks.includes("o") ? " off" : "") + '"><td colspan="5">' + nameCell(marks, icon, name) + "</td></tr>";
            gray = !gray;
            continue;
        }

        if (marks.includes("=")) gray = !gray;
        html += '<tr class="' + (gray ? "gray" : "white") + (marks.includes("c") ? " child" : "") + '"><td>' + nameCell(marks, icon, name) + "</td>";
        values.forEach((value, i) => {
            let cls = "value";
            if (i === 0 && marks.includes("*")) cls += " changed";
            if (i === 0 && marks.includes("t")) cls += " has-tip";
            html += '<td class="' + cls + '">' + value + "</td>";
        });
        html += "</tr>";
        gray = !gray;
    }
    document.getElementById(id).innerHTML = html + "</tbody>";
}

fillTable("left", left);
fillTable("middle", middle);
fillTable("right", right);
document.querySelector(".has-tip").append(document.getElementById("tip").content.cloneNode(true));
```
